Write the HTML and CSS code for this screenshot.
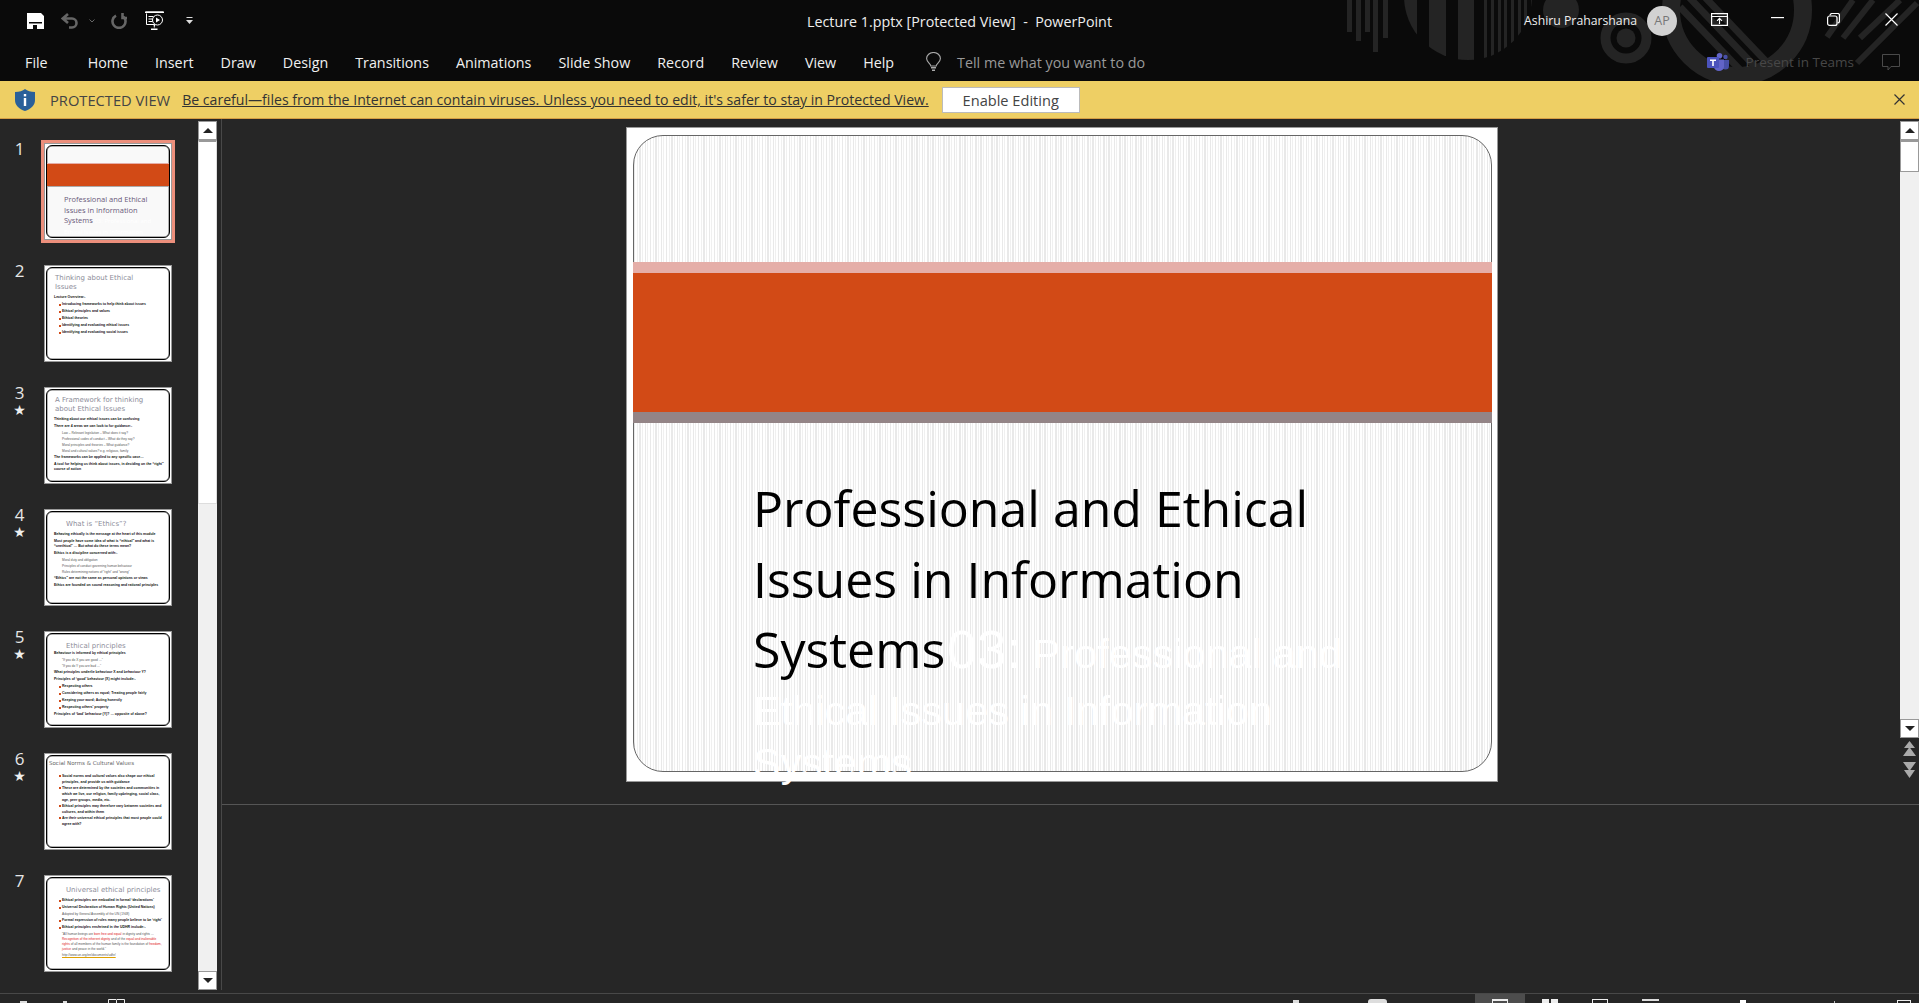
FILE: index.html
```html
<!DOCTYPE html>
<html lang="en">
<head>
    <meta charset="UTF-8">
    <meta name="viewport" content="width=device-width, initial-scale=1.0">
    <title>Lecture 1.pptx [Protected View] - PowerPoint</title>
    <link rel="stylesheet" href="styles.css">
</head>
<body>
    <header class="titlebar">
        <!-- Background art behind the title bar -->
        <svg class="art" viewBox="1319 0 600 81" aria-hidden="true">
            <defs>
                <clipPath id="artHalf"><circle cx="1468" cy="-4" r="64"/></clipPath>
                <clipPath id="artRing"><circle cx="1737" cy="10" r="60"/></clipPath>
            </defs>
            <g fill="#242424">
                <rect x="1347" y="0" width="5" height="32"/>
                <rect x="1356" y="0" width="5" height="41"/>
                <rect x="1365" y="0" width="5" height="32"/>
                <rect x="1373" y="0" width="5" height="52"/>
                <rect x="1383" y="0" width="5" height="38"/>
                <g clip-path="url(#artHalf)">
                    <rect x="1400" y="0" width="17" height="70"/>
                    <rect x="1429" y="0" width="17" height="70"/>
                    <rect x="1458" y="0" width="16" height="70"/>
                    <rect x="1484" y="0" width="3" height="70"/>
                    <rect x="1491" y="0" width="3" height="70"/>
                    <rect x="1498" y="0" width="3" height="70"/>
                    <rect x="1504" y="0" width="3" height="70"/>
                    <rect x="1511" y="0" width="3" height="70"/>
                    <rect x="1518" y="0" width="3" height="70"/>
                    <rect x="1524" y="0" width="3" height="70"/>
                    <rect x="1531" y="0" width="3" height="70"/>
                </g>
                <circle cx="1561" cy="10" r="18"/>
                <circle cx="1626" cy="38" r="9.5"/>
            </g>
            <g fill="none" stroke="#242424">
                <circle cx="1626" cy="38" r="20.5" stroke-width="10"/>
                <circle cx="1737" cy="10" r="66" stroke-width="18"/>
                <g stroke-width="7" clip-path="url(#artRing)">
                    <line x1="1680" y1="7" x2="1745" y2="75"/>
                    <line x1="1686" y1="-6" x2="1762" y2="74"/>
                    <line x1="1700" y1="-8" x2="1778" y2="74"/>
                </g>
                <g stroke-width="6">
                    <line x1="1827" y1="37" x2="1853" y2="0"/>
                    <line x1="1843" y1="38" x2="1873" y2="0"/>
                    <line x1="1860" y1="38" x2="1900" y2="0"/>
                    <line x1="1857" y1="63" x2="1917" y2="3"/>
                </g>
            </g>
        </svg>

        <div class="titlebar-top">
            <div class="qat">
                <svg class="qat-save" viewBox="0 0 17 16">
                    <path fill="#fff" fill-rule="evenodd" d="M0 0h14l3 3v13H0zM2 9h13v1.500H2zM6 12h4v4H6z"/>
                </svg>
                <svg class="qat-undo" viewBox="0 0 17 16">
                    <path fill="none" stroke="#666" stroke-width="2.600" d="M7 1 1.800 5.500 7 10M1.800 5.500H11a4.500 4.500 0 0 1 0 9H8"/>
                </svg>
                <svg class="qat-chevron" viewBox="0 0 6 4">
                    <path fill="none" stroke="#666" d="M.5.500 3 3 5.500.500"/>
                </svg>
                <svg class="qat-redo" viewBox="0 0 16 16">
                    <path fill="none" stroke="#666" stroke-width="2.600" d="M5 2.600a6.500 6.500 0 1 0 6 0M11.500 0v5H16"/>
                </svg>
                <svg class="qat-present" viewBox="0 0 19 19">
                    <path fill="none" stroke="#fff" d="M1.500 2.500v11h8M1 1h17"/>
                    <path fill="#fff" d="M0 .5h19v1.500H0zM3.500 5h5v1h-5zM3.500 7.500h4v1h-4zM3.500 10h4v1h-4zM6 17.500h6.500v1.500H6z"/>
                    <circle cx="12.500" cy="9" r="5" fill="none" stroke="#fff"/>
                    <path fill="#fff" d="M11 6.500 15 9l-4 2.500zM8.500 13l2 .5-1.500 4z"/>
                </svg>
                <svg class="qat-custom" viewBox="0 0 7 7">
                    <path fill="#ddd" d="M.5 0h6v1h-6zM0 3h7L3.500 7z"/>
                </svg>
            </div>
            <div class="doc-title">Lecture 1.pptx [Protected View]&nbsp; -&nbsp; PowerPoint</div>
            <div class="user-area">
                <span class="user-name">Ashiru Praharshana</span>
                <span class="avatar">AP</span>
                <svg class="win-ribbon" viewBox="0 0 17 13">
                    <path fill="none" stroke="#fff" stroke-width="1.200" d="M.6.6h15.800v11.800H.6zM.6 3.500h15.800M8.500 11V5.500M6 7.800l2.500-2.500L11 7.800"/>
                </svg>
                <svg class="win-min" viewBox="0 0 13 2"><rect width="13" height="1.200" fill="#fff"/></svg>
                <svg class="win-restore" viewBox="0 0 13 13">
                    <path fill="none" stroke="#fff" stroke-width="1.200" d="M3 2.500a2 2 0 0 1 2-2h5.500a2 2 0 0 1 2 2V8a2 2 0 0 1-2 2"/>
                    <rect x=".6" y="3" width="9.400" height="9.400" rx="2" fill="none" stroke="#fff" stroke-width="1.200"/>
                </svg>
                <svg class="win-close" viewBox="0 0 13 13">
                    <path stroke="#fff" stroke-width="1.200" d="M.5.500l12 12M12.500.500l-12 12"/>
                </svg>
            </div>
        </div>

        <div class="titlebar-bottom">
            <nav class="tabs">
                <a class="tab tab-file">File</a>
                <a class="tab">Home</a>
                <a class="tab">Insert</a>
                <a class="tab">Draw</a>
                <a class="tab">Design</a>
                <a class="tab">Transitions</a>
                <a class="tab">Animations</a>
                <a class="tab">Slide Show</a>
                <a class="tab">Record</a>
                <a class="tab">Review</a>
                <a class="tab">View</a>
                <a class="tab">Help</a>
            </nav>
            <svg class="bulb" viewBox="0 0 15 20">
                <path fill="none" stroke="#aaa" stroke-width="1.100" d="M4.800 14c0-2.500-4.200-3.800-4.200-7.500a6.900 6 0 0 1 13.800 0c0 3.700-4.200 5-4.200 7.500z"/>
                <path fill="#aaa" d="M5 15h5v1.500H5zM6 17.500h3V19H6z"/>
            </svg>
            <span class="tell-me">Tell me what you want to do</span>
            <div class="share-area">
                <svg class="teams" viewBox="0 0 22 18">
                    <circle cx="12.500" cy="2.800" r="2.800" fill="#6264c7"/>
                    <circle cx="18.500" cy="4" r="2.200" fill="#4850a8"/>
                    <path fill="#4850a8" d="M15 7h7v6a3.500 3.500 0 0 1-7 0z"/>
                    <path fill="#6264c7" d="M7 6.500h10v7.500a5 4 0 0 1-10 0z"/>
                    <rect y="4" width="12" height="11" rx="1" fill="#4b53bc"/>
                    <path fill="#fff" d="M3 6.500h6v1.500H6.800v5H5.200V8H3z"/>
                </svg>
                <span class="present-teams">Present in Teams</span>
                <svg class="comment" viewBox="0 0 18 17">
                    <path fill="none" stroke="#4a4a4a" d="M.5.500h17v12H9l-3 3.500v-3.500H.5z"/>
                </svg>
            </div>
        </div>
    </header>

    <div class="notice">
        <svg class="shield" viewBox="0 0 20 22">
            <path fill="#2a6099" d="M10 0c2.500 2 5.500 3 10 3v8c0 5.500-4 9-10 11C4 20 0 16.500 0 11V3c4.500 0 7.500-1 10-3z"/>
            <rect x="8.800" y="5" width="2.400" height="2.400" fill="#fff"/>
            <rect x="8.800" y="9" width="2.400" height="8" fill="#fff"/>
        </svg>
        <span class="notice-label">PROTECTED VIEW</span>
        <a class="notice-link">Be careful—files from the Internet can contain viruses. Unless you need to edit, it's safer to stay in Protected View.</a>
        <button class="enable-btn">Enable Editing</button>
        <svg class="notice-close" viewBox="0 0 11 11">
            <path stroke="#333" stroke-width="1.200" d="M.5.500l10 10M10.500.500l-10 10"/>
        </svg>
    </div>

    <main class="workspace">
        <aside class="sidebar">
            <div class="thumb-list">
                <div class="thumb-row">
                    <div class="thumb-num">1</div>
                    <div class="thumb thumb-active">
                        <div class="thumb-frame thumb-frame-first">
                            <div class="thumb-band"></div>
                            <p class="thumb-heading">Professional and Ethical<br>Issues in Information<br>Systems<span class="thumb-ghost"> 03: Professional and<br>Ethical Issues in Information<br>Systems</span></p>
                        </div>
                    </div>
                </div>

                <div class="thumb-row">
                    <div class="thumb-num">2</div>
                    <div class="thumb">
                        <div class="thumb-frame">
                            <p class="thumb-title">Thinking about Ethical<br>Issues</p>
                            <p class="thumb-line">Lecture Overview:-</p>
                            <p class="thumb-bullet">Introducing frameworks to help think about issues</p>
                            <p class="thumb-bullet">Ethical principles and values</p>
                            <p class="thumb-bullet">Ethical theories</p>
                            <p class="thumb-bullet">Identifying and evaluating ethical issues</p>
                            <p class="thumb-bullet">Identifying and evaluating social issues</p>
                        </div>
                    </div>
                </div>

                <div class="thumb-row">
                    <div class="thumb-num">3<span class="star">★</span></div>
                    <div class="thumb">
                        <div class="thumb-frame">
                            <p class="thumb-title">A Framework for thinking<br>about Ethical Issues</p>
                            <p class="thumb-line">Thinking about our ethical issues can be confusing</p>
                            <p class="thumb-line">There are 4 areas we can look to for guidance:-</p>
                            <p class="thumb-sub">Law – Relevant legislation – What does it say?</p>
                            <p class="thumb-sub">Professional codes of conduct – What do they say?</p>
                            <p class="thumb-sub">Moral principles and theories – What guidance?</p>
                            <p class="thumb-sub">Moral and cultural values? e.g. religious, family</p>
                            <p class="thumb-line">The frameworks can be applied to any specific case…</p>
                            <p class="thumb-line">A tool for helping us think about issues, in deciding on the “right” course of action</p>
                        </div>
                    </div>
                </div>

                <div class="thumb-row">
                    <div class="thumb-num">4<span class="star">★</span></div>
                    <div class="thumb">
                        <div class="thumb-frame">
                            <p class="thumb-title thumb-title-in">What is “Ethics”?</p>
                            <p class="thumb-line">Behaving ethically is the message at the heart of this module</p>
                            <p class="thumb-line">Most people have some idea of what is “ethical” and what is “unethical” … But what do these terms mean?</p>
                            <p class="thumb-line">Ethics is a discipline concerned with:-</p>
                            <p class="thumb-sub">Moral duty and obligation</p>
                            <p class="thumb-sub">Principles of conduct governing human behaviour</p>
                            <p class="thumb-sub">Rules determining notions of “right” and “wrong”</p>
                            <p class="thumb-line">“Ethics” are not the same as personal opinions or views</p>
                            <p class="thumb-line">Ethics are founded on sound reasoning and rational principles</p>
                        </div>
                    </div>
                </div>

                <div class="thumb-row">
                    <div class="thumb-num">5<span class="star">★</span></div>
                    <div class="thumb">
                        <div class="thumb-frame">
                            <p class="thumb-title thumb-title-in thumb-title-tight">Ethical principles</p>
                            <p class="thumb-line">Behaviour is informed by ethical principles</p>
                            <p class="thumb-sub">“If you do X you are good …”</p>
                            <p class="thumb-sub">“If you do Y you are bad …”</p>
                            <p class="thumb-line">What principles underlie behaviour X and behaviour Y?</p>
                            <p class="thumb-line">Principles of ‘good’ behaviour (X) might include:-</p>
                            <p class="thumb-bullet">Respecting others</p>
                            <p class="thumb-bullet">Considering others as equal; Treating people fairly</p>
                            <p class="thumb-bullet">Keeping your word; Acting honestly</p>
                            <p class="thumb-bullet">Respecting others' property</p>
                            <p class="thumb-line">Principles of ‘bad’ behaviour (Y)? … opposite of above?</p>
                        </div>
                    </div>
                </div>

                <div class="thumb-row">
                    <div class="thumb-num">6<span class="star">★</span></div>
                    <div class="thumb">
                        <div class="thumb-frame thumb-frame-loose">
                            <p class="thumb-title thumb-title-out">Social Norms &amp; Cultural Values</p>
                            <p class="thumb-bullet">Social norms and cultural values also shape our ethical principles, and provide us with guidance</p>
                            <p class="thumb-bullet">These are determined by the societies and communities in which we live, our religion, family upbringing, social class, age, peer groups, media, etc.</p>
                            <p class="thumb-bullet">Ethical principles may therefore vary between societies and cultures, and within them</p>
                            <p class="thumb-bullet">Are their universal ethical principles that most people could agree with?</p>
                        </div>
                    </div>
                </div>

                <div class="thumb-row">
                    <div class="thumb-num">7</div>
                    <div class="thumb">
                        <div class="thumb-frame">
                            <p class="thumb-title thumb-title-in">Universal ethical principles</p>
                            <p class="thumb-bullet">Ethical principles are embodied in formal ‘declarations’</p>
                            <p class="thumb-bullet">Universal Declaration of Human Rights (United Nations)</p>
                            <p class="thumb-sub">Adopted by General Assembly of the UN (1948)</p>
                            <p class="thumb-bullet">Formal expression of rules many people believe to be ‘right’</p>
                            <p class="thumb-bullet">Ethical principles enshrined in the UDHR include:-</p>
                            <p class="thumb-sub">“All human beings are <span class="thumb-red">born free and equal</span> in dignity and rights … <span class="thumb-red">Recognition of the inherent dignity</span> and of the <span class="thumb-red">equal and inalienable rights</span> of all members of the human family is the foundation of <span class="thumb-red">freedom, justice</span> and peace in the world.”</p>
                            <p class="thumb-sub thumb-link">http://www.un.org/en/documents/udhr/</p>
                        </div>
                    </div>
                </div>
            </div>

            <div class="vscroll vscroll-side">
                <div class="scroll-btn"><span class="arrow-up"></span></div>
                <div class="scroll-thumb scroll-thumb-side"></div>
                <div class="scroll-track"></div>
                <div class="scroll-btn"><span class="arrow-down"></span></div>
            </div>
        </aside>

        <section class="editor">
            <div class="editor-top">
                <div class="slide-pane">
                    <div class="slide">
                        <div class="slide-frame">
                            <div class="band-pink"></div>
                            <div class="band-orange"></div>
                            <div class="band-grey"></div>
                            <p class="slide-title"><span class="title-text">Professional and Ethical<br>Issues in Information<br>Systems</span><span class="ghost"><span class="ghost-num">03:</span> Professional and<br>Ethical Issues in Information<br>Systems</span></p>
                        </div>
                    </div>
                </div>
                <div class="vscroll-main">
                    <div class="vscroll">
                        <div class="scroll-btn"><span class="arrow-up"></span></div>
                        <div class="scroll-thumb scroll-thumb-main"></div>
                        <div class="scroll-track"></div>
                        <div class="scroll-btn"><span class="arrow-down"></span></div>
                    </div>
                    <svg class="page-arrows" viewBox="0 0 13 37">
                        <path fill="#aaa" d="M6.500 0 12 7H1zM6.500 6 13 15H0zM0 21h13L6.500 30zM1 29h11L6.500 37z"/>
                    </svg>
                </div>
            </div>
            <div class="notes"></div>
        </section>
    </main>

    <!-- Only the top edge of the status bar is on screen -->
    <footer class="statusbar">
        <div class="status-left">
            <span class="status-dot"></span>
            <span class="status-dot status-dot-b"></span>
            <svg class="status-book" viewBox="0 0 17 10"><path fill="none" stroke="#eee" d="M.5 10V.5h7.500l.5 1 .5-1h7.500V10M8.500 1.500V10"/></svg>
        </div>
        <div class="status-right">
            <span class="status-peak"></span>
            <span class="status-pill"></span>
            <span class="status-view status-view-on"><span class="view-box"></span></span>
            <span class="status-view"><span class="view-split"></span></span>
            <span class="status-view"><span class="view-box view-box-thin"></span></span>
            <span class="status-view"><span class="view-top"></span></span>
            <span class="status-knob"></span>
            <span class="status-tick"></span>
            <span class="view-box view-box-thin status-fit"></span>
        </div>
    </footer>
</body>
</html>
```

FILE: styles.css
```css
* {
    box-sizing: border-box;
}

html, body {
    height: 100%;
}

body {
    margin: 0;
    font-family: "Open Sans", "Noto Sans", sans-serif;
    background-color: #262626;
    color: #eee;
    overflow: hidden;
    display: flex;
    flex-direction: column;
}

p {
    margin: 0;
}

svg {
    display: block;
    flex: none;
}

/* Title bar */
.titlebar {
    position: relative;
    height: 81px;
    flex: none;
    background-color: #0a0a0a;
    font-size: 14.3px;
}

.art {
    position: absolute;
    top: 0;
    right: 0;
    width: 600px;
    height: 81px;
}

.titlebar-top {
    position: relative;
    height: 41px;
    display: grid;
    grid-template-columns: 1fr auto 1fr;
    align-items: center;
}

.qat {
    display: flex;
    align-items: center;
    padding-left: 27px;
}

.qat-save { width: 17px; height: 16px; }
.qat-undo { width: 17px; height: 16px; margin-left: 17px; }
.qat-chevron { width: 6px; height: 4px; margin-left: 11px; }
.qat-redo { width: 16px; height: 16px; margin-left: 16px; }
.qat-present { width: 19px; height: 19px; margin-left: 18px; }
.qat-custom { width: 7px; height: 7px; margin-left: 22px; }

.doc-title {
    color: #eee;
    white-space: nowrap;
    margin-top: 1px;
}

.user-area {
    display: flex;
    align-items: center;
    justify-content: flex-end;
    padding-right: 21px;
}

.user-name {
    color: #eee;
    font-size: 12.25px;
    margin-right: 10px;
}

.avatar {
    width: 30px;
    height: 30px;
    border-radius: 50%;
    background-color: #d2d2d2;
    color: #777;
    font-size: 12.5px;
    display: flex;
    align-items: center;
    justify-content: center;
}

.win-ribbon { width: 17px; height: 13px; margin-left: 34px; margin-top: -3px; }
.win-min { width: 13px; height: 2px; margin-left: 43px; margin-top: -5px; }
.win-restore { width: 13px; height: 13px; margin-left: 43px; margin-top: -3px; }
.win-close { width: 13px; height: 13px; margin-left: 45px; margin-top: -3px; }

.titlebar-bottom {
    position: relative;
    height: 40px;
    display: flex;
    align-items: center;
    padding-left: 25px;
    padding-top: 2px;
}

.tabs {
    display: flex;
    gap: 27px;
}

.tab {
    color: #f0f0f0;
    white-space: nowrap;
}

.tab-file {
    margin-right: 13px;
}

.bulb {
    width: 15px;
    height: 20px;
    margin-left: 32px;
}

.tell-me {
    color: #999;
    margin-left: 16px;
}

.share-area {
    margin-left: auto;
    display: flex;
    align-items: center;
    padding-right: 19px;
}

.teams { width: 22px; height: 18px; }

.present-teams {
    color: #474747;
    font-size: 13.5px;
    margin-left: 17px;
}

.comment { width: 18px; height: 17px; margin-left: 28px; }

/* Protected view notice */
.notice {
    height: 38px;
    flex: none;
    display: flex;
    align-items: center;
    padding: 0 14px 0 15px;
    background-color: #eecf64;
    border-bottom: 1px solid #d59f45;
    color: #333;
    font-size: 14.1px;
}

.shield { width: 20px; height: 22px; }

.notice-label {
    margin-left: 15px;
    color: #444;
    font-size: 14.7px;
    white-space: nowrap;
}

.notice-link {
    margin-left: 12px;
    text-decoration: underline;
    white-space: nowrap;
}

.enable-btn {
    margin-left: 13px;
    width: 138px;
    height: 26px;
    padding: 0;
    background-color: #fff;
    border: 1px solid #bbb;
    color: #444;
    font-family: inherit;
    font-size: 14.6px;
}

.notice-close {
    width: 11px;
    height: 11px;
    margin-left: auto;
}

/* Main area */
.workspace {
    height: 874px;
    flex: none;
    display: flex;
}

.sidebar {
    width: 222px;
    flex: none;
    height: 871px;
    display: flex;
    border-right: 1px solid #484848;
}

.thumb-list {
    width: 198px;
    flex: none;
    padding-top: 24px;
    display: flex;
    flex-direction: column;
    gap: 25px;
}

.thumb-row {
    display: flex;
}

.thumb-num {
    width: 44px;
    flex: none;
    padding-right: 5px;
    margin-top: -4px;
    text-align: center;
    color: #e6e6e6;
    font-size: 17px;
    line-height: 20px;
    display: flex;
    flex-direction: column;
    align-items: center;
}

.star {
    font-family: "DejaVu Sans", sans-serif;
    font-size: 14px;
    line-height: 15px;
    color: #eee;
}

.thumb {
    width: 128px;
    height: 97px;
    flex: none;
    background-color: #fff;
    border: 1px solid #999;
    padding: 1px;
}

.thumb-active {
    outline: 3px solid #ec8f7c;
}

.thumb-frame {
    height: 100%;
    background-color: #fff;
    border: 1px solid #000;
    border-radius: 6px;
    box-shadow: inset 0 0 0 0.5px #666;
    padding: 3px 5px 0 7px;
    overflow: hidden;
    color: #111;
    font-size: 3.5px;
    line-height: 5px;
    font-family: "Liberation Sans", sans-serif;
    font-weight: bold;
}

.thumb-frame-first {
    padding: 18px 0 0;
    background-color: #f9f9f9;
}

.thumb-band {
    height: 22px;
    background-color: #d24a16;
    box-shadow: 0 -1px 0 #e5aea8, 0 1px 0 #aaa;
}

.thumb-heading {
    margin: 8px 0 0 17px;
    color: #6a5a7a;
    font-family: "Open Sans", sans-serif;
    font-size: 7.5px;
    line-height: 10.500px;
    font-weight: normal;
    white-space: nowrap;
}

.thumb-ghost {
    color: #fff;
    font-size: 6px;
    line-height: 8px;
}

.thumb-title {
    margin: 3px 0 3px 1px;
    color: #8d8d9a;
    font-family: "DejaVu Sans", sans-serif;
    font-size: 7px;
    line-height: 9px;
    font-weight: normal;
    white-space: nowrap;
}

.thumb-title-in {
    margin: 5px 0 3px 12px;
}

.thumb-title-tight {
    margin-bottom: 0;
}

.thumb-title-out {
    margin: 0 0 5px -5px;
    color: #666;
    font-size: 5.500px;
}

.thumb-line {
    margin-bottom: 2px;
}

.thumb-bullet {
    margin: 0 0 2px 5px;
    padding-left: 3px;
    position: relative;
}

.thumb-bullet::before {
    content: "";
    position: absolute;
    left: 0;
    top: 2px;
    width: 1.500px;
    height: 1.500px;
    background-color: #d24a16;
}

.thumb-frame-loose {
    line-height: 6px;
}

.thumb-frame-loose .thumb-bullet {
    margin-bottom: 0;
}

.thumb-sub {
    margin: 0 0 1px 8px;
    font-size: 3.200px;
    color: #555;
    font-weight: normal;
}

.thumb-red {
    color: #e02020;
}

.thumb-link {
    color: #555;
    text-decoration: underline;
    text-decoration-color: #e0a000;
}

/* Scrollbars */
.vscroll {
    width: 19px;
    flex: none;
    display: flex;
    flex-direction: column;
    background-color: #f0f0f0;
    margin-top: 2px;
}

.vscroll-side {
    height: 869px;
}

.scroll-btn {
    height: 19px;
    flex: none;
    background-color: #fff;
    border: 1px solid #999;
    display: flex;
    align-items: center;
    justify-content: center;
}

.arrow-up, .arrow-down {
    width: 0;
    height: 0;
    border-left: 5px solid transparent;
    border-right: 5px solid transparent;
}

.arrow-up { border-bottom: 5px solid #222; }
.arrow-down { border-top: 5px solid #222; }

.scroll-thumb {
    flex: none;
    background-color: #fff;
    border: 1px solid #999;
    border-top-width: 2px;
}

.scroll-thumb-side { height: 364px; border-left-color: #ddd; border-right-color: #ddd; border-bottom-color: #ddd; }
.scroll-thumb-main { height: 32px; }

.scroll-track {
    flex: 1;
}

/* Slide editor */
.editor {
    flex: 1;
    display: flex;
    flex-direction: column;
}

.editor-top {
    height: 685px;
    flex: none;
    display: flex;
}

.slide-pane {
    flex: 1;
    padding: 8px 0 0 2px;
    display: flex;
    justify-content: center;
    align-items: flex-start;
}

.slide {
    width: 872px;
    height: 655px;
    background-color: #fff;
    border: 1px solid #999;
    padding: 7px 5px 9px 6px;
}

.slide-frame {
    height: 100%;
    padding-top: 126px;
    border: 1px solid #666;
    border-radius: 30px;
    background-color: #fff;
    background-image:
        repeating-linear-gradient(90deg, #e9e9e9 0 1.500px, transparent 1.500px 5.330px),
        repeating-linear-gradient(90deg, transparent 0 2.670px, #f0f0f0 2.670px 3.670px, transparent 3.670px 5.330px);
}

.band-pink {
    height: 11px;
    margin: 0 -1px;
    background-color: #e5aea8;
}

.band-orange {
    height: 139px;
    margin: 0 -1px;
    background-color: #d24a16;
}

.band-grey {
    height: 11px;
    margin: 0 -1px;
    background-color: #938486;
}

/* line-height 0 here so each span below sets its own line pitch */
.slide-title {
    padding: 50px 0 0 119px;
    color: #000;
    font-family: "Open Sans", "Noto Sans", sans-serif;
    font-size: 0;
    line-height: 0;
    white-space: nowrap;
}

.title-text {
    font-size: 50px;
    line-height: 70.500px;
}

.ghost {
    color: #fff;
    font-family: "Liberation Sans", sans-serif;
    font-size: 41.5px;
    line-height: 52px;
}

.ghost-num {
    font-size: 53px;
    margin-left: 2px;
}

.vscroll-main {
    width: 19px;
    flex: none;
    display: flex;
    flex-direction: column;
    align-items: center;
}

.vscroll-main .vscroll {
    height: 617px;
}

.page-arrows {
    width: 13px;
    height: 37px;
    margin-top: 3px;
}

.notes {
    flex: 1;
    border-top: 1px solid #555;
}

/* Status bar */
.statusbar {
    height: 10px;
    flex: none;
    border-top: 1px solid #484848;
    display: flex;
    justify-content: space-between;
    overflow: hidden;
}

.status-left {
    position: relative;
    display: flex;
    padding-left: 20px;
    padding-top: 7px;
}

.status-dot {
    width: 7px;
    height: 2px;
    background-color: #ddd;
}

.status-dot-b {
    width: 4px;
    margin-left: 36px;
}

.status-book {
    width: 17px;
    height: 10px;
    margin-left: 41px;
    margin-top: -2px;
}

.status-right {
    display: flex;
    padding-right: 8px;
}

.status-peak {
    width: 6px;
    height: 3px;
    margin-top: 6px;
    background-color: #ddd;
    margin-right: 69px;
}

.status-pill {
    width: 19px;
    height: 10px;
    margin-top: 5px;
    margin-right: 88px;
    background-color: #ddd;
    border-radius: 3px 3px 0 0;
}

.status-view {
    width: 50px;
    height: 9px;
    display: flex;
    justify-content: center;
    padding-top: 5px;
}

.status-view-on {
    background-color: #4d4d4d;
}

.view-box {
    width: 16px;
    height: 10px;
    border: 1px solid #eee;
    border-top-width: 2px;
}

.view-box-thin {
    border-top-width: 1px;
}

.view-split {
    width: 16px;
    height: 10px;
    border-left: 7px solid #eee;
    border-right: 7px solid #eee;
}

.view-top {
    width: 17px;
    height: 2px;
    background-color: #ddd;
}

.status-knob {
    width: 6px;
    height: 5px;
    margin: 6px 88px 0 65px;
    background-color: #fff;
}

.status-tick {
    width: 1px;
    height: 2px;
    margin: 7px 62px 0 0;
    background-color: #bbb;
}

.status-fit {
    margin-top: 6px;
    width: 14px;
}
```
